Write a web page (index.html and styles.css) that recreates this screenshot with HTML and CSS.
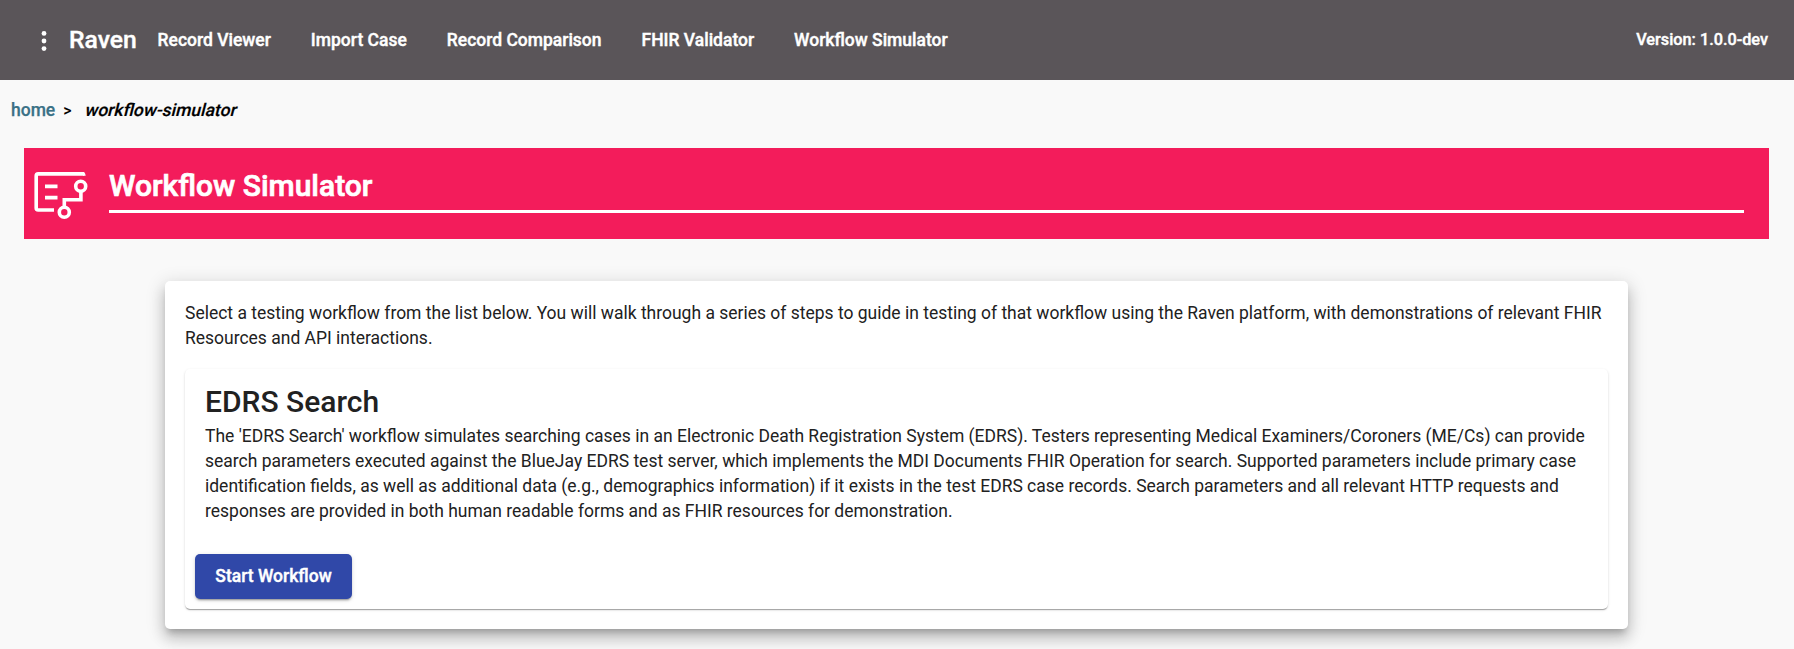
FILE: index.html
```html
<!DOCTYPE html>
<html lang="en">
<head>
<meta charset="utf-8">
<title>Raven</title>
<link rel="stylesheet" href="styles.css">
</head>
<body>
<header class="toolbar">
  <svg class="menu-icon" width="6" height="20" viewBox="0 0 6 20"><circle cx="3" cy="2.4" r="2.4"/><circle cx="3" cy="10" r="2.4"/><circle cx="3" cy="17.6" r="2.4"/></svg>
  <span class="brand">Raven</span>
  <nav class="nav"><a>Record Viewer</a><a>Import Case</a><a>Record Comparison</a><a>FHIR Validator</a><a>Workflow Simulator</a></nav>
  <span class="version">Version: 1.0.0-dev</span>
</header>
<div class="breadcrumb"><a class="home">home</a><span class="separator">&gt;</span><span class="current">workflow-simulator</span></div>
<section class="banner">
  <svg class="banner-icon" width="54" height="50" viewBox="34 171 54 50" fill="none" stroke="#fff" stroke-width="3.6">
    <path d="M84.2 173.9H38.2Q36.2 173.9 36.2 175.9V208Q36.2 210 38.2 210H54"/>
    <path d="M83 172.1Q85.2 172.4 85.7 175.7H83Z" fill="#fff" stroke="none"/>
    <path d="M45 186.4H57.5M45 197.6H57.5"/>
    <path d="M80.9 192V199.8H64.3V207"/>
    <circle cx="80.7" cy="186.3" r="5"/><circle cx="64.3" cy="212.3" r="5"/>
  </svg>
  <h1 class="banner-title">Workflow Simulator</h1>
</section>
<main class="card">
  <p class="intro">Select a testing workflow from the list below. You will walk through a series of steps to guide in testing of that workflow using the Raven platform, with demonstrations of relevant FHIR Resources and API interactions.</p>
  <article class="workflow">
    <h2 class="workflow-title">EDRS Search</h2>
    <p class="description">The 'EDRS Search' workflow simulates searching cases in an Electronic Death Registration System (EDRS). Testers representing Medical Examiners/Coroners (ME/Cs) can provide search parameters executed against the BlueJay EDRS test server, which implements the MDI Documents FHIR Operation for search. Supported parameters include primary case identification fields, as well as additional data (e.g., demographics information) if it exists in the test EDRS case records. Search parameters and all relevant HTTP requests and responses are provided in both human readable forms and as FHIR resources for demonstration.</p>
    <button class="start">Start Workflow</button>
  </article>
</main>
</body>
</html>
```
FILE: styles.css
```css
* { box-sizing: border-box; }
body { margin: 0; height: 649px; overflow: hidden; background: #f9f9f9; color: #212121; font: 400 17.49px/25px Roboto, sans-serif; }
h1, h2, p { margin: 0; }
.toolbar { height: 80px; display: flex; align-items: center; padding: 0 26px 0 41px; background: #5a5559; color: #fff; font-weight: 500; -webkit-text-stroke: .4px #fff; }
.menu-icon { fill: #fff; margin: 2px 22px 0 0; }
.brand { width: 88.6px; font-size: 24.7px; padding-bottom: 1px; white-space: nowrap; }
.nav { display: flex; gap: 40px; padding-top: 1px; white-space: nowrap; }
.version { margin-left: auto; padding-bottom: 1px; font-size: 16.25px; white-space: nowrap; }
.breadcrumb { height: 68px; padding: 18px 0 0 11px; font-weight: 500; color: #000; }
.home { color: #3a7186; -webkit-text-stroke: .25px #3a7186; }
.separator { margin: 0 12px 0 8px; font-size: 16px; }
.current { display: inline-block; transform: skewX(-14deg); transform-origin: 0 75%; -webkit-text-stroke: .2px #000; }
.banner { margin: 0 25px 0 24px; height: 91px; padding: 23px 25px 0 10px; display: flex; background: #f31c5b; }
.banner-icon { flex: none; margin-right: 21px; }
.banner-title { flex: 1; height: 42px; border-bottom: 3px solid #fff; color: #fff; font-size: 30px; line-height: 29px; font-weight: 500; -webkit-text-stroke: .7px #fff; }
.card { width: 1463px; height: 348px; margin: 42px 0 0 165px; padding: 20px; border-radius: 5px; background: #fff; box-shadow: 0 6px 6px -3px rgba(0,0,0,.2), 0 10px 14px 1px rgba(0,0,0,.14), 0 4px 18px 3px rgba(0,0,0,.12); }
.intro { height: 68px; }
.workflow { height: 240px; padding: 18px 20px 0; border-radius: 5px; box-shadow: 0 2px 1px -1px rgba(0,0,0,.2), 0 1px 1px rgba(0,0,0,.14), 0 1px 3px rgba(0,0,0,.12); }
.workflow-title { font-size: 30px; line-height: 30px; font-weight: 500; margin-bottom: 7px; }
.start { display: block; width: 157px; height: 45px; margin: 30px 0 0 -10px; padding: 0 0 2px; border: 0; border-radius: 5px; background: #3048a8; color: #fff; font: 500 17.5px Roboto, sans-serif; -webkit-text-stroke: .4px #fff; box-shadow: 0 3px 1px -2px rgba(0,0,0,.2), 0 2px 2px rgba(0,0,0,.14), 0 1px 5px rgba(0,0,0,.12); }
```
